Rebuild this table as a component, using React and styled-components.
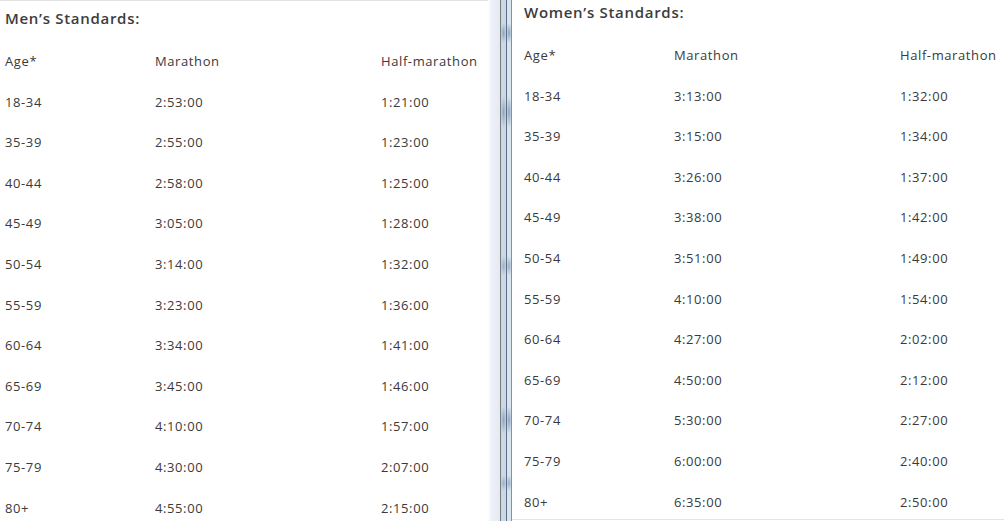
import React from 'react';
import styled, { createGlobalStyle } from 'styled-components';

const men = [
  ['18-34', '2:53:00', '1:21:00'],
  ['35-39', '2:55:00', '1:23:00'],
  ['40-44', '2:58:00', '1:25:00'],
  ['45-49', '3:05:00', '1:28:00'],
  ['50-54', '3:14:00', '1:32:00'],
  ['55-59', '3:23:00', '1:36:00'],
  ['60-64', '3:34:00', '1:41:00'],
  ['65-69', '3:45:00', '1:46:00'],
  ['70-74', '4:10:00', '1:57:00'],
  ['75-79', '4:30:00', '2:07:00'],
  ['80+', '4:55:00', '2:15:00'],
];

const women = [
  ['18-34', '3:13:00', '1:32:00'],
  ['35-39', '3:15:00', '1:34:00'],
  ['40-44', '3:26:00', '1:37:00'],
  ['45-49', '3:38:00', '1:42:00'],
  ['50-54', '3:51:00', '1:49:00'],
  ['55-59', '4:10:00', '1:54:00'],
  ['60-64', '4:27:00', '2:02:00'],
  ['65-69', '4:50:00', '2:12:00'],
  ['70-74', '5:30:00', '2:27:00'],
  ['75-79', '6:00:00', '2:40:00'],
  ['80+', '6:35:00', '2:50:00'],
];

function Standards({ title, rows, side }) {
  return (
    <Panel $side={side}>
      <Title $side={side}>{title}</Title>
      <Table>
        <Cell>Age*</Cell>
        <Cell>Marathon</Cell>
        <Cell>Half-marathon</Cell>
        {rows.map((r) => (
          <React.Fragment key={r[0]}>
            <Cell>{r[0]}</Cell>
            <Cell>{r[1]}</Cell>
            <Cell>{r[2]}</Cell>
          </React.Fragment>
        ))}
      </Table>
    </Panel>
  );
}

export default function App() {
  return (
    <>
      <Global />
      <Main>
        <Standards title="Men’s Standards:" rows={men} side="left" />
        <Divider>
          <Line $c="#7a7a7a" />
          <Groove $w={5} $c="#c9d9ea" />
          <Line $c="#5f6f80" />
          <Groove $w={4} $c="#d8e4f0" />
          <Line $c="#7d93a8" />
        </Divider>
        <Standards title="Women’s Standards:" rows={women} side="right" />
      </Main>
    </>
  );
}

const Global = createGlobalStyle`
  html, body {
    margin: 0;
    padding: 0;
    background: #fff;
    overflow: hidden;
  }
`;

const Main = styled.div`
  width: 1004px;
  height: 521px;
  display: flex;
  font-family: 'Open Sans', 'Liberation Sans', sans-serif;
  color: #3a3a3a;
`;

const Panel = styled.div`
  width: ${(p) => (p.$side === 'left' ? '488px' : 'auto')};
  flex: ${(p) => (p.$side === 'left' ? 'none' : '1')};
  box-sizing: border-box;
  padding-left: ${(p) => (p.$side === 'left' ? '5px' : '12px')};
  border-top: ${(p) => (p.$side === 'left' ? '1px solid #e2e2e2' : 'none')};
  border-bottom: ${(p) => (p.$side === 'right' ? '1px solid #e4e4e4' : 'none')};
  height: ${(p) => (p.$side === 'right' ? '520px' : '521px')};
  overflow: hidden;
`;

const Title = styled.div`
  font-size: 15px;
  font-weight: 600;
  letter-spacing: 0.7px;
  color: #3c3c3c;
  height: 20px;
  line-height: 20px;
  margin-top: ${(p) => (p.$side === 'left' ? '7px' : '2px')};
  margin-bottom: 13px;
`;

const Table = styled.div`
  display: grid;
  grid-template-columns: 150px 226px 1fr;
  grid-auto-rows: 40.6px;
`;

const Cell = styled.div`
  font-size: 13px;
  letter-spacing: 0.6px;
  line-height: 40.6px;
  white-space: nowrap;
  color: #3a3a3a;
`;

const Divider = styled.div`
  width: 24px;
  box-sizing: border-box;
  flex: none;
  display: flex;
  padding-left: 12px;
  background: linear-gradient(to right, #fff 0, #eef2f7 3px, #e4eaf2 12px);
`;

const Line = styled.div`
  width: 1px;
  background: ${(p) => p.$c};
`;

const Groove = styled.div`
  width: ${(p) => p.$w}px;
  background:
    radial-gradient(ellipse 3px 10px at 50% 33px, #8ea6c0, transparent),
    radial-gradient(ellipse 3px 16px at 50% 112px, #8ea6c0, transparent),
    radial-gradient(ellipse 3px 10px at 50% 266px, #9ab0c8, transparent),
    radial-gradient(ellipse 3px 14px at 50% 420px, #8ea6c0, transparent),
    radial-gradient(ellipse 3px 8px at 50% 483px, #9ab0c8, transparent),
    ${(p) => p.$c};
`;
